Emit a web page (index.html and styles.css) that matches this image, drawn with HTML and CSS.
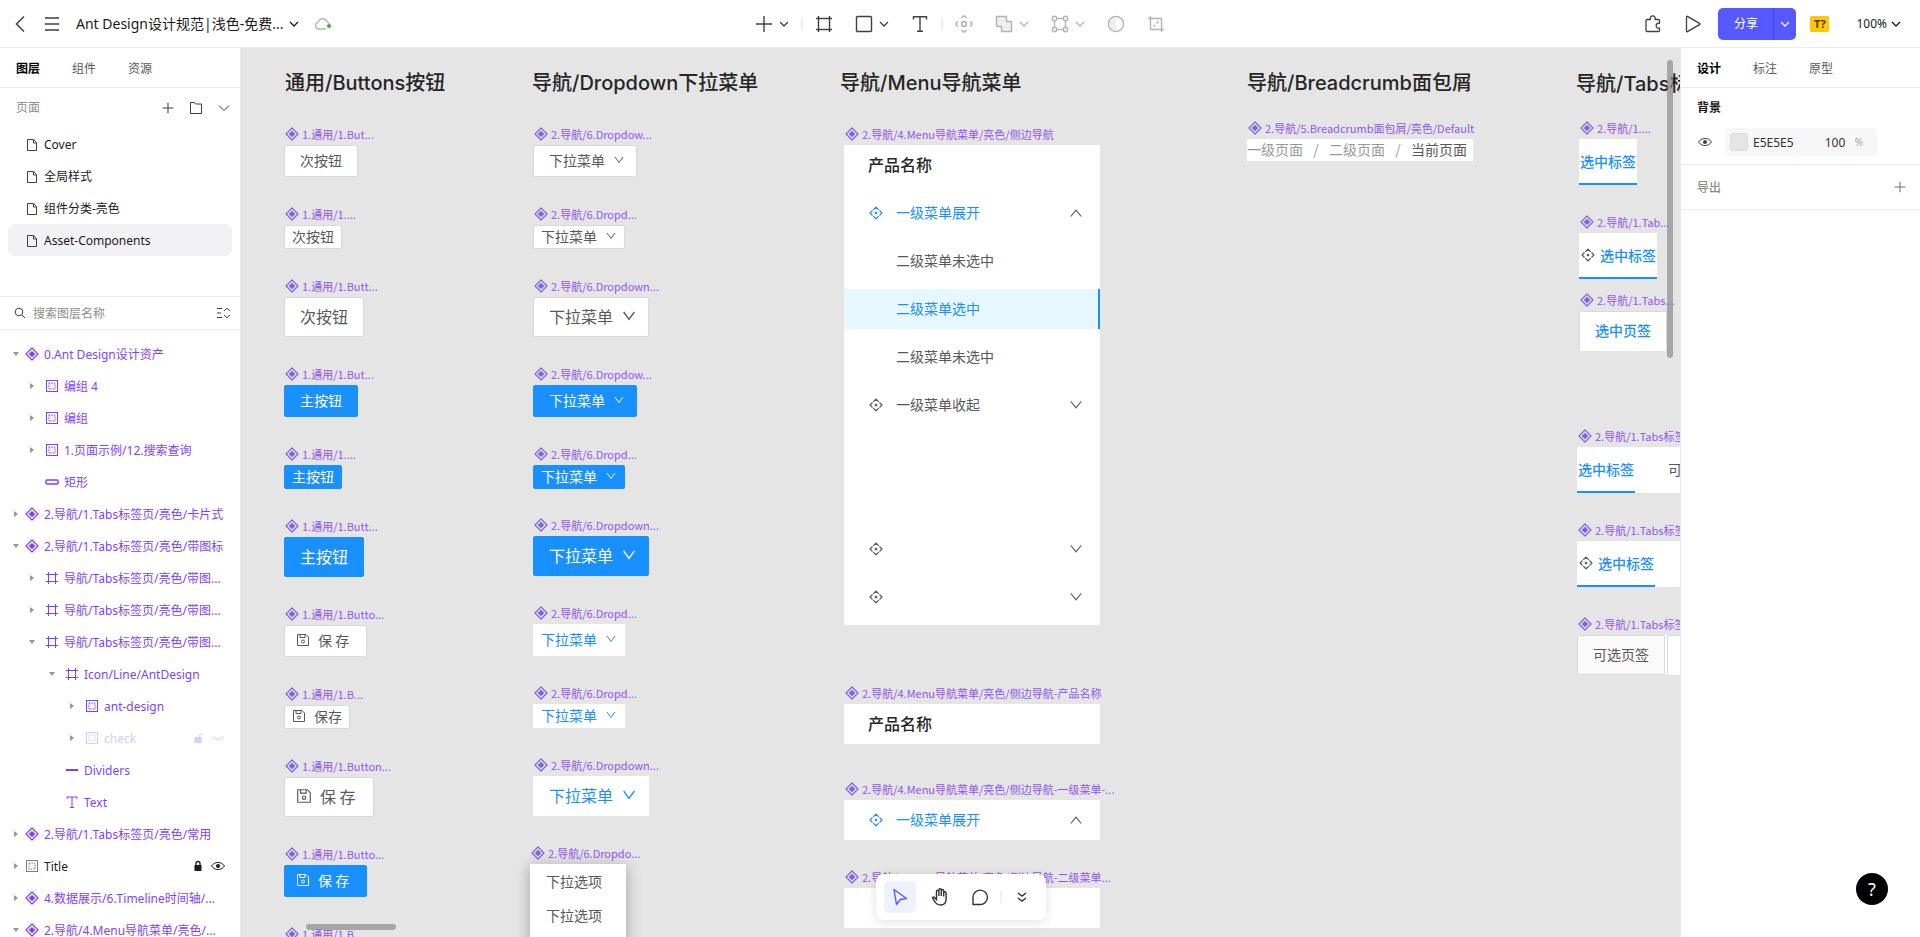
FILE: index.html
```html
<!DOCTYPE html>
<html lang="zh-CN">
<head>
<meta charset="utf-8">
<title>Ant Design设计规范</title>
<link rel="stylesheet" href="styles.css">
</head>
<body>
<svg class="sprite" aria-hidden="true">
  <symbol id="i-back" viewBox="0 0 16 18"><path d="M12 1.500L4.500 9l7.500 7.500"/></symbol>
  <symbol id="i-menu" viewBox="0 0 16 16"><path d="M1 2h14M1 8h14M1 14h14"/></symbol>
  <symbol id="i-down" viewBox="0 0 16 16"><path d="M4 6l4 4 4-4"/></symbol>
  <symbol id="i-down-lg" viewBox="0 0 16 16"><path d="M3 5.500l5 5 5-5"/></symbol>
  <symbol id="i-cloud" viewBox="0 0 18 14"><path d="M12 12H4.500A3.500 3.500 0 0 1 4 5.200 4.700 4.700 0 0 1 12.800 4.600M13 4.600c1.200.5 1.700 1.300 1.900 2.400"/><circle cx="15" cy="9" r="2" fill="#39b316" stroke="none"/></symbol>
  <symbol id="i-plus" viewBox="0 0 24 24"><path d="M12 4v16M4 12h16"/></symbol>
  <symbol id="i-frame" viewBox="0 0 24 24"><path d="M6.500 4v16M17.500 4v16M4 6.500h16M4 17.500h16"/></symbol>
  <symbol id="i-rect" viewBox="0 0 24 24"><rect x="4.500" y="4.500" width="15" height="15" rx="1"/></symbol>
  <symbol id="i-text" viewBox="0 0 24 24"><path d="M5.500 7.500v-2.800h13v2.800M12 4.700v14.600M9 19.300h6"/></symbol>
  <symbol id="i-move" viewBox="0 0 24 24"><circle cx="12" cy="12" r="2.500" fill="#eee"/><path d="M9.500 6L12 3.700 14.500 6M9.500 18l2.500 2.300 2.500-2.300M6 9.500L3.700 12 6 14.500M18 9.500l2.300 2.500-2.300 2.500"/></symbol>
  <symbol id="i-bool" viewBox="0 0 24 24"><path fill="#eee" d="M4.500 4.500h10v5h5v10h-10v-5h-5z"/></symbol>
  <symbol id="i-mask" viewBox="0 0 24 24"><rect x="6.500" y="6.500" width="11" height="11"/><g fill="#fff"><circle cx="6.500" cy="6.500" r="2.200"/><circle cx="17.500" cy="6.500" r="2.200"/><circle cx="6.500" cy="17.500" r="2.200"/><circle cx="17.500" cy="17.500" r="2.200"/></g></symbol>
  <symbol id="i-contrast" viewBox="0 0 24 24"><circle cx="12" cy="12" r="7.500"/><path fill="#eee" stroke="none" d="M12 5.200a6.800 6.800 0 0 0 0 13.600z"/></symbol>
  <symbol id="i-crop" viewBox="0 0 24 24"><path d="M6.500 4v13.500H20M4 6.500h13.500V20M9.500 14.500l1.500-1.500M12.500 11.500l2-2"/></symbol>
  <symbol id="i-puzzle" viewBox="0 0 18 18"><path d="M3 4.500H6.500a2.500 2.500 0 1 1 4.500 0h3.500c.6 0 1 .4 1 1v2.800a2.500 2.500 0 1 0 0 4.700v2.500c0 .6-.4 1-1 1H3c-.6 0-1-.4-1-1v-10c0-.6.4-1 1-1z" stroke-linejoin="round"/></symbol>
  <symbol id="i-play" viewBox="0 0 18 18"><path d="M2.500 1.800v14.400c0 .6.500.7 1 .4l12-7c.6-.3.600-.9 0-1.200l-12-7c-.5-.3-1-.2-1 .4z"/></symbol>
  <symbol id="i-folder" viewBox="0 0 16 16"><path d="M2.500 13.500v-11h4l1 1.500h6v9.500z"/></symbol>
  <symbol id="i-file" viewBox="0 0 16 16"><path d="M3.500 2.500h6l3 3v8h-9zM9.500 2.500v3.500h3"/></symbol>
  <symbol id="i-search" viewBox="0 0 16 16"><circle cx="7" cy="7" r="3.800"/><path d="M9.800 9.800L13 13"/></symbol>
  <symbol id="i-collapse" viewBox="0 0 16 14"><path d="M2 2.500h5M2 7h4M2 11.500h5M9 5l3-2.800L15 5M9 9l3 2.800L15 9"/></symbol>
  <symbol id="i-comp" viewBox="0 0 16 16"><path d="M8 2L14 8 8 14 2 8z" stroke-width="1.200" stroke-linejoin="round"/><path d="M8 4.700L11.300 8 8 11.300 4.700 8z" fill="currentColor" stroke="none"/></symbol>
  <symbol id="i-group" viewBox="0 0 16 16"><rect x="2.500" y="2.500" width="11" height="11"/><rect x="5" y="5" width="6" height="6" stroke-dasharray="1.500 1"/></symbol>
  <symbol id="i-hash" viewBox="0 0 16 16"><path d="M4.500 2v12M11.500 2v12M2 4.500h12M2 11.500h12"/></symbol>
  <symbol id="i-bar" viewBox="0 0 16 16"><rect x="2" y="6" width="12" height="4" rx="1" stroke-width="1.500"/></symbol>
  <symbol id="i-line" viewBox="0 0 16 16"><path d="M2 8h12" stroke-width="2"/></symbol>
  <symbol id="i-type" viewBox="0 0 16 16"><path d="M3 5V3h10v2M8 3v10.500M6 13.500h4"/></symbol>
  <symbol id="i-open" viewBox="0 0 16 16"><path d="M5 6h6l-3 4z" fill="currentColor" stroke="none"/></symbol>
  <symbol id="i-shut" viewBox="0 0 16 16"><path d="M6 5v6l4-3z" fill="currentColor" stroke="none"/></symbol>
  <symbol id="i-lock" viewBox="0 0 16 16"><rect x="4.500" y="7" width="7" height="6" fill="currentColor" stroke="none"/><path d="M6 7V5.500a2 2 0 0 1 4 0V7" stroke-width="1.300"/></symbol>
  <symbol id="i-unlock" viewBox="0 0 16 16"><rect x="4.500" y="7" width="7" height="6" fill="currentColor" stroke="none"/><path d="M9.500 7V5a2 2 0 0 1 3.500 0"/></symbol>
  <symbol id="i-eye" viewBox="0 0 16 16"><path d="M1.500 8C4.500 3.300 11.500 3.300 14.500 8 11.500 12.700 4.500 12.700 1.500 8z"/><circle cx="8" cy="8" r="2" fill="currentColor" stroke="none"/></symbol>
  <symbol id="i-hidden" viewBox="0 0 16 16"><path d="M2 6.500c3.500 3.300 8.500 3.300 12 0M4.500 8.500L3 10M8 9.200V11M11.500 8.500L13 10"/></symbol>
  <symbol id="i-aim" viewBox="0 0 14 14"><path stroke-width="1.200" d="M4.200 3.900L7 1.200l2.800 2.700M10.500 4.500L12.900 7l-2.400 2.500M9.800 10.100L7 12.800l-2.800-2.700M3.500 9.500L1.100 7l2.400-2.500"/><circle cx="7" cy="7" r="1.300" fill="currentColor" stroke="none"/></symbol>
  <symbol id="i-v" viewBox="0 0 12 12"><path d="M2 3l4 5.500L10 3"/></symbol>
  <symbol id="i-vup" viewBox="0 0 12 12"><path d="M1.500 9L6 3.500 10.500 9"/></symbol>
  <symbol id="i-vdn" viewBox="0 0 12 12"><path d="M1.500 3L6 8.500 10.500 3"/></symbol>
  <symbol id="i-save" viewBox="0 0 14 14"><path d="M1.500 1.500h8.500l2.500 2.500v8.500h-11zM4 1.500v3h5v-3"/><circle cx="7" cy="8.500" r="1.500"/></symbol>
  <symbol id="i-cursor" viewBox="0 0 20 20"><path d="M4 2.500l12.500 9-6.200 1-3.800 5z" stroke-linejoin="round"/></symbol>
  <symbol id="i-hand" viewBox="0 0 20 20"><path d="M6.500 10V4.500a1.200 1.200 0 0 1 2.400 0V9M8.900 9V3a1.200 1.200 0 0 1 2.400 0v6M11.300 9V3.700a1.200 1.200 0 0 1 2.400 0V9.500M13.700 9.500V6a1.200 1.200 0 0 1 2.400 0v6c0 4-2.300 6-5.600 6-3 0-4.500-1.500-5.700-3.500L2.700 11.500c-.6-1.100.8-2 1.700-1.100L6.500 12.500V10"/></symbol>
  <symbol id="i-chat" viewBox="0 0 20 20"><path d="M3 17.500V10a7.200 7.200 0 1 1 7.200 7.500z" stroke-linejoin="round"/></symbol>
  <symbol id="i-more" viewBox="0 0 16 16"><path d="M4 4l4 3 4-3M4 9l4 3 4-3"/></symbol>
</svg>

<header class="topbar">
  <div class="topbar-left">
    <button class="ibtn" aria-label="返回"><svg class="ic-back"><use href="#i-back"/></svg></button>
    <button class="ibtn" aria-label="菜单"><svg class="s16 bold"><use href="#i-menu"/></svg></button>
    <button class="file-name">Ant Design设计规范|浅色-免费...<svg class="s16 bold"><use href="#i-down"/></svg></button>
    <svg class="ic-cloud"><use href="#i-cloud"/></svg>
  </div>
  <div class="tools">
    <div class="tool"><button class="ibtn" aria-label="新增"><svg class="s24"><use href="#i-plus"/></svg></button><button class="ibtn" aria-label="新增选项"><svg class="s16 bold"><use href="#i-down"/></svg></button></div>
    <span class="sep"></span>
    <button class="ibtn" aria-label="容器"><svg class="s24"><use href="#i-frame"/></svg></button>
    <div class="tool"><button class="ibtn" aria-label="矩形"><svg class="s24"><use href="#i-rect"/></svg></button><button class="ibtn" aria-label="形状选项"><svg class="s16 bold"><use href="#i-down"/></svg></button></div>
    <button class="ibtn" aria-label="文本"><svg class="s24"><use href="#i-text"/></svg></button>
    <span class="sep"></span>
    <button class="ibtn off" aria-label="组件"><svg class="s24"><use href="#i-move"/></svg></button>
    <div class="tool off"><button class="ibtn" aria-label="布尔运算"><svg class="s24"><use href="#i-bool"/></svg></button><button class="ibtn" aria-label="布尔选项"><svg class="s16 bold"><use href="#i-down"/></svg></button></div>
    <div class="tool off"><button class="ibtn" aria-label="编辑"><svg class="s24"><use href="#i-mask"/></svg></button><button class="ibtn" aria-label="编辑选项"><svg class="s16 bold"><use href="#i-down"/></svg></button></div>
    <button class="ibtn off" aria-label="蒙版"><svg class="s24"><use href="#i-contrast"/></svg></button>
    <button class="ibtn off" aria-label="裁剪"><svg class="s24"><use href="#i-crop"/></svg></button>
  </div>
  <div class="topbar-right">
    <button class="ibtn" aria-label="插件"><svg class="s18"><use href="#i-puzzle"/></svg></button>
    <button class="ibtn" aria-label="演示"><svg class="s18"><use href="#i-play"/></svg></button>
    <div class="share"><button class="share-main">分享</button><button class="share-more" aria-label="分享选项"><svg class="s16 bold"><use href="#i-down"/></svg></button></div>
    <button class="font-warn">T?</button>
    <button class="zoom">100%<svg class="s16 bold"><use href="#i-down"/></svg></button>
  </div>
</header>

<main class="work">
  <aside class="left">
    <div class="tabs"><button class="tab on">图层</button><button class="tab">组件</button><button class="tab">资源</button></div>
    <section class="pages">
      <div class="pages-head"><span>页面</span>
        <button class="ibtn" aria-label="新建页面"><svg class="s16 thin"><use href="#i-plus"/></svg></button>
        <button class="ibtn" aria-label="新建分组"><svg class="s16"><use href="#i-folder"/></svg></button>
        <button class="ibtn" aria-label="折叠"><svg class="s16"><use href="#i-down-lg"/></svg></button>
      </div>
      <button class="page"><svg class="s16"><use href="#i-file"/></svg>Cover</button>
      <button class="page"><svg class="s16"><use href="#i-file"/></svg>全局样式</button>
      <button class="page"><svg class="s16"><use href="#i-file"/></svg>组件分类-亮色</button>
      <button class="page on"><svg class="s16"><use href="#i-file"/></svg>Asset-Components</button>
    </section>
    <div class="search">
      <svg class="s16"><use href="#i-search"/></svg>
      <input type="text" aria-label="搜索图层名称" placeholder="搜索图层名称">
      <button class="ibtn" aria-label="全部折叠"><svg class="ic-collapse"><use href="#i-collapse"/></svg></button>
    </div>
    <div class="tree">
      <div class="row"><svg class="s16 arrow"><use href="#i-open"/></svg><svg class="s16"><use href="#i-comp"/></svg><span class="name">0.Ant Design设计资产</span></div>
      <div class="row l1"><svg class="s16 arrow"><use href="#i-shut"/></svg><svg class="s16"><use href="#i-group"/></svg><span class="name">编组 4</span></div>
      <div class="row l1"><svg class="s16 arrow"><use href="#i-shut"/></svg><svg class="s16"><use href="#i-group"/></svg><span class="name">编组</span></div>
      <div class="row l1"><svg class="s16 arrow"><use href="#i-shut"/></svg><svg class="s16"><use href="#i-group"/></svg><span class="name">1.页面示例/12.搜索查询</span></div>
      <div class="row l1"><svg class="s16 arrow"></svg><svg class="s16"><use href="#i-bar"/></svg><span class="name">矩形</span></div>
      <div class="row"><svg class="s16 arrow"><use href="#i-shut"/></svg><svg class="s16"><use href="#i-comp"/></svg><span class="name">2.导航/1.Tabs标签页/亮色/卡片式</span></div>
      <div class="row"><svg class="s16 arrow"><use href="#i-open"/></svg><svg class="s16"><use href="#i-comp"/></svg><span class="name">2.导航/1.Tabs标签页/亮色/带图标</span></div>
      <div class="row l1"><svg class="s16 arrow"><use href="#i-shut"/></svg><svg class="s16"><use href="#i-hash"/></svg><span class="name">导航/Tabs标签页/亮色/带图...</span></div>
      <div class="row l1"><svg class="s16 arrow"><use href="#i-shut"/></svg><svg class="s16"><use href="#i-hash"/></svg><span class="name">导航/Tabs标签页/亮色/带图...</span></div>
      <div class="row l1"><svg class="s16 arrow"><use href="#i-open"/></svg><svg class="s16"><use href="#i-hash"/></svg><span class="name">导航/Tabs标签页/亮色/带图...</span></div>
      <div class="row l2"><svg class="s16 arrow"><use href="#i-open"/></svg><svg class="s16"><use href="#i-hash"/></svg><span class="name">Icon/Line/AntDesign</span></div>
      <div class="row l3"><svg class="s16 arrow"><use href="#i-shut"/></svg><svg class="s16"><use href="#i-group"/></svg><span class="name">ant-design</span></div>
      <div class="row l3 hidden"><svg class="s16 arrow"><use href="#i-shut"/></svg><svg class="s16"><use href="#i-group"/></svg><span class="name">check</span><span class="acts"><svg class="s16"><use href="#i-unlock"/></svg><svg class="s16"><use href="#i-hidden"/></svg></span></div>
      <div class="row l2"><svg class="s16 arrow"></svg><svg class="s16"><use href="#i-line"/></svg><span class="name">Dividers</span></div>
      <div class="row l2"><svg class="s16 arrow"></svg><svg class="s16"><use href="#i-type"/></svg><span class="name">Text</span></div>
      <div class="row"><svg class="s16 arrow"><use href="#i-shut"/></svg><svg class="s16"><use href="#i-comp"/></svg><span class="name">2.导航/1.Tabs标签页/亮色/常用</span></div>
      <div class="row plain"><svg class="s16 arrow"><use href="#i-shut"/></svg><svg class="s16 grey"><use href="#i-group"/></svg><span class="name">Title</span><span class="acts"><svg class="s16"><use href="#i-lock"/></svg><svg class="s16"><use href="#i-eye"/></svg></span></div>
      <div class="row"><svg class="s16 arrow"><use href="#i-shut"/></svg><svg class="s16"><use href="#i-comp"/></svg><span class="name">4.数据展示/6.Timeline时间轴/...</span></div>
      <div class="row"><svg class="s16 arrow"><use href="#i-open"/></svg><svg class="s16"><use href="#i-comp"/></svg><span class="name">2.导航/4.Menu导航菜单/亮色/...</span></div>
    </div>
  </aside>

  <section class="canvas">
    <h2 class="title" style="--x:44;--y:23">通用/Buttons按钮</h2>
    <h2 class="title" style="--x:291;--y:23">导航/Dropdown下拉菜单</h2>
    <h2 class="title" style="--x:599;--y:23">导航/Menu导航菜单</h2>
    <h2 class="title" style="--x:1006;--y:23">导航/Breadcrumb面包屑</h2>
    <h2 class="title" style="--x:1335;--y:24">导航/Tabs标签页</h2>

    <div class="node" style="--x:43;--y:77"><div class="label"><svg class="s16"><use href="#i-comp"/></svg>1.通用/1.But...</div><button class="btn">次按钮</button></div>
    <div class="node" style="--x:43;--y:157"><div class="label"><svg class="s16"><use href="#i-comp"/></svg>1.通用/1....</div><button class="btn sm">次按钮</button></div>
    <div class="node" style="--x:43;--y:229"><div class="label"><svg class="s16"><use href="#i-comp"/></svg>1.通用/1.Butt...</div><button class="btn lg">次按钮</button></div>
    <div class="node" style="--x:43;--y:317"><div class="label"><svg class="s16"><use href="#i-comp"/></svg>1.通用/1.But...</div><button class="btn primary">主按钮</button></div>
    <div class="node" style="--x:43;--y:397"><div class="label"><svg class="s16"><use href="#i-comp"/></svg>1.通用/1....</div><button class="btn sm primary">主按钮</button></div>
    <div class="node" style="--x:43;--y:469"><div class="label"><svg class="s16"><use href="#i-comp"/></svg>1.通用/1.Butt...</div><button class="btn lg primary">主按钮</button></div>
    <div class="node" style="--x:43;--y:557"><div class="label"><svg class="s16"><use href="#i-comp"/></svg>1.通用/1.Butto...</div><button class="btn save"><svg class="s14"><use href="#i-save"/></svg>保 存</button></div>
    <div class="node" style="--x:43;--y:637"><div class="label"><svg class="s16"><use href="#i-comp"/></svg>1.通用/1.B...</div><button class="btn sm save"><svg class="s14"><use href="#i-save"/></svg>保存</button></div>
    <div class="node" style="--x:43;--y:709"><div class="label"><svg class="s16"><use href="#i-comp"/></svg>1.通用/1.Button...</div><button class="btn lg save"><svg class="s16"><use href="#i-save"/></svg>保 存</button></div>
    <div class="node" style="--x:43;--y:797"><div class="label"><svg class="s16"><use href="#i-comp"/></svg>1.通用/1.Butto...</div><button class="btn save primary"><svg class="s14"><use href="#i-save"/></svg>保 存</button></div>
    <div class="node" style="--x:43;--y:877"><div class="label"><svg class="s16"><use href="#i-comp"/></svg>1.通用/1.B...</div></div>

    <div class="node" style="--x:292;--y:77"><div class="label"><svg class="s16"><use href="#i-comp"/></svg>2.导航/6.Dropdow...</div><button class="btn drop">下拉菜单<svg class="s12"><use href="#i-v"/></svg></button></div>
    <div class="node" style="--x:292;--y:157"><div class="label"><svg class="s16"><use href="#i-comp"/></svg>2.导航/6.Dropd...</div><button class="btn sm drop">下拉菜单<svg class="s12"><use href="#i-v"/></svg></button></div>
    <div class="node" style="--x:292;--y:229"><div class="label"><svg class="s16"><use href="#i-comp"/></svg>2.导航/6.Dropdown...</div><button class="btn lg drop">下拉菜单<svg class="s16"><use href="#i-v"/></svg></button></div>
    <div class="node" style="--x:292;--y:317"><div class="label"><svg class="s16"><use href="#i-comp"/></svg>2.导航/6.Dropdow...</div><button class="btn drop primary">下拉菜单<svg class="s12"><use href="#i-v"/></svg></button></div>
    <div class="node" style="--x:292;--y:397"><div class="label"><svg class="s16"><use href="#i-comp"/></svg>2.导航/6.Dropd...</div><button class="btn sm drop primary">下拉菜单<svg class="s12"><use href="#i-v"/></svg></button></div>
    <div class="node" style="--x:292;--y:468"><div class="label"><svg class="s16"><use href="#i-comp"/></svg>2.导航/6.Dropdown...</div><button class="btn lg drop primary">下拉菜单<svg class="s16"><use href="#i-v"/></svg></button></div>
    <div class="node" style="--x:292;--y:556"><div class="label"><svg class="s16"><use href="#i-comp"/></svg>2.导航/6.Dropd...</div><button class="btn tight drop link">下拉菜单<svg class="s12"><use href="#i-v"/></svg></button></div>
    <div class="node" style="--x:292;--y:636"><div class="label"><svg class="s16"><use href="#i-comp"/></svg>2.导航/6.Dropd...</div><button class="btn sm drop link">下拉菜单<svg class="s12"><use href="#i-v"/></svg></button></div>
    <div class="node" style="--x:292;--y:708"><div class="label"><svg class="s16"><use href="#i-comp"/></svg>2.导航/6.Dropdown...</div><button class="btn lg drop link">下拉菜单<svg class="s16"><use href="#i-v"/></svg></button></div>
    <div class="node" style="--x:289;--y:796"><div class="label"><svg class="s16"><use href="#i-comp"/></svg>2.导航/6.Dropdo...</div><div class="options"><div>下拉选项</div><div>下拉选项</div></div></div>

    <div class="node" style="--x:603;--y:77"><div class="label"><svg class="s16"><use href="#i-comp"/></svg>2.导航/4.Menu导航菜单/亮色/侧边导航</div>
      <div class="side full">
        <div class="brand">产品名称</div>
        <div class="item blue"><svg class="s14"><use href="#i-aim"/></svg><span>一级菜单展开</span><svg class="s14 end"><use href="#i-vup"/></svg></div>
        <div class="item sub">二级菜单未选中</div>
        <div class="item sub sel">二级菜单选中</div>
        <div class="item sub">二级菜单未选中</div>
        <div class="item"><svg class="s14"><use href="#i-aim"/></svg><span>一级菜单收起</span><svg class="s14 end"><use href="#i-vdn"/></svg></div>
        <div class="item"></div>
        <div class="item"></div>
        <div class="item"><svg class="s14"><use href="#i-aim"/></svg><svg class="s14 end"><use href="#i-vdn"/></svg></div>
        <div class="item"><svg class="s14"><use href="#i-aim"/></svg><svg class="s14 end"><use href="#i-vdn"/></svg></div>
      </div>
    </div>
    <div class="node" style="--x:603;--y:636"><div class="label"><svg class="s16"><use href="#i-comp"/></svg>2.导航/4.Menu导航菜单/亮色/侧边导航-产品名称</div><div class="side"><div class="brand">产品名称</div></div></div>
    <div class="node" style="--x:603;--y:732"><div class="label"><svg class="s16"><use href="#i-comp"/></svg>2.导航/4.Menu导航菜单/亮色/侧边导航-一级菜单-...</div><div class="side"><div class="item blue"><svg class="s14"><use href="#i-aim"/></svg><span>一级菜单展开</span><svg class="s14 end"><use href="#i-vup"/></svg></div></div></div>
    <div class="node" style="--x:603;--y:820"><div class="label"><svg class="s16"><use href="#i-comp"/></svg>2.导航/4.Menu导航菜单/亮色/侧边导航-二级菜单...</div><div class="side"><div class="item"></div></div></div>

    <div class="node" style="--x:1006;--y:71"><div class="label"><svg class="s16"><use href="#i-comp"/></svg>2.导航/5.Breadcrumb面包屑/亮色/Default</div>
      <div class="crumbs"><span>一级页面</span><i>/</i><span>二级页面</span><i>/</i><b>当前页面</b></div>
    </div>

    <div class="node" style="--x:1338;--y:71"><div class="label"><svg class="s16"><use href="#i-comp"/></svg>2.导航/1....</div><div class="tabset"><div class="t on">选中标签</div></div></div>
    <div class="node" style="--x:1338;--y:165"><div class="label"><svg class="s16"><use href="#i-comp"/></svg>2.导航/1.Tab...</div><div class="tabset"><div class="t on"><svg class="s14"><use href="#i-aim"/></svg>选中标签</div></div></div>
    <div class="node" style="--x:1338;--y:243"><div class="label"><svg class="s16"><use href="#i-comp"/></svg>2.导航/1.Tabs...</div><div class="cards"><div class="c on">选中页签</div></div></div>
    <div class="node" style="--x:1336;--y:379"><div class="label"><svg class="s16"><use href="#i-comp"/></svg>2.导航/1.Tabs标签页/亮色/常用</div><div class="tabset wide"><div class="t on">选中标签</div><div class="t">可选标签</div></div></div>
    <div class="node" style="--x:1336;--y:473"><div class="label"><svg class="s16"><use href="#i-comp"/></svg>2.导航/1.Tabs标签页/亮色/带图标</div><div class="tabset wide"><div class="t on"><svg class="s14"><use href="#i-aim"/></svg>选中标签</div></div></div>
    <div class="node" style="--x:1336;--y:567"><div class="label"><svg class="s16"><use href="#i-comp"/></svg>2.导航/1.Tabs标签页/亮色/卡片式</div><div class="cards back"><div class="c">可选页签</div><div class="c on blank"></div></div></div>

    <div class="vbar"></div>
    <div class="hbar"></div>
    <div class="dock">
      <button class="dock-btn on" aria-label="选择"><svg class="s20"><use href="#i-cursor"/></svg></button>
      <button class="dock-btn" aria-label="移动画布"><svg class="s20"><use href="#i-hand"/></svg></button>
      <button class="dock-btn" aria-label="评论"><svg class="s20"><use href="#i-chat"/></svg></button>
      <span class="sep"></span>
      <button class="dock-btn" aria-label="更多"><svg class="s16"><use href="#i-more"/></svg></button>
    </div>
  </section>

  <aside class="right">
    <div class="tabs"><button class="tab on">设计</button><button class="tab">标注</button><button class="tab">原型</button></div>
    <section class="bg">
      <h3>背景</h3>
      <div class="bg-row">
        <button class="ibtn" aria-label="显示背景"><svg class="s16"><use href="#i-eye"/></svg></button>
        <div class="field"><span class="swatch"></span><input class="hex" type="text" aria-label="颜色" value="E5E5E5"><input class="alpha" type="text" aria-label="不透明度" value="100"><span class="unit">%</span></div>
      </div>
    </section>
    <section class="export"><span>导出</span><button class="ibtn" aria-label="添加导出"><svg class="s16 thin"><use href="#i-plus"/></svg></button></section>
    <button class="help" aria-label="帮助">?</button>
  </aside>
</main>
</body>
</html>
```
FILE: styles.css
```css
* { box-sizing: border-box; }
body {
  margin: 0; height: 100vh; display: flex; flex-direction: column; overflow: hidden;
  font: 12px/20px "Noto Sans", "Noto Sans CJK SC", sans-serif; color: #1a1a1a; background: #fff;
}
button, input { font: inherit; color: inherit; border: 0; padding: 0; margin: 0; background: none; min-width: 0; }
input { outline: 0; }
h2, h3 { margin: 0; font: inherit; }
svg { fill: none; stroke: currentColor; flex: none; display: block; }
.sprite { position: absolute; width: 0; height: 0; }
.s12 { width: 12px; height: 12px; }
.s14 { width: 14px; height: 14px; }
.s16 { width: 16px; height: 16px; }
.s18 { width: 18px; height: 18px; }
.s20 { width: 20px; height: 20px; }
.s24 { width: 24px; height: 24px; stroke-width: 1.4; }
.bold { stroke-width: 1.3; }
.thin { stroke-width: 1.6; }
.ibtn { display: flex; align-items: center; justify-content: center; color: #404040; }

/* top bar */
.topbar { flex: none; height: 48px; display: grid; grid-template-columns: 1fr auto 1fr; align-items: center; border-bottom: 1px solid #ebebeb; }
.topbar-left { display: flex; align-items: center; padding-left: 12px; }
.topbar-left .ibtn + .ibtn { margin-left: 16px; }
.ic-back { width: 16px; height: 18px; stroke-width: 1.5; }
.ic-cloud { width: 18px; height: 14px; color: #b5b5b5; stroke-width: 1.4; margin-left: 12px; }
.file-name { display: flex; align-items: center; gap: 3px; margin-left: 16px; font-size: 14px; }
.tools { display: flex; align-items: center; gap: 16px; }
.tool { display: flex; align-items: center; }
.off, .off .ibtn { color: #b3b3b3; }
.sep { width: 2px; height: 12px; background: #f0f0f0; }
.tools .sep { margin: 0 -7px; }
.topbar-right { display: flex; align-items: center; justify-content: flex-end; padding-right: 16px; }
.topbar-right .ibtn { margin-right: 22px; stroke-width: 1.3; }
.topbar-right .ibtn + .ibtn { margin-right: 16px; }
.share { display: flex; height: 32px; border-radius: 5px; overflow: hidden; background: #5659ff; color: #fff; }
.share-main { width: 56px; border-right: 1px solid #4446e0; }
.share-more { width: 22px; display: flex; align-items: center; justify-content: center; }
.font-warn { width: 19px; height: 16px; border-radius: 2px; background: #ffc60a; color: #4d3b00; font-size: 11px; font-weight: 700; line-height: 16px; margin: 0 27px 0 14px; }
.zoom { display: flex; align-items: center; gap: 1px; }

/* workspace */
.work { flex: 1; min-height: 0; display: grid; grid-template-columns: 241px minmax(0, 1fr) 240px; }
.left, .right { min-height: 0; display: flex; flex-direction: column; overflow: hidden; }
.left { border-right: 1px solid #ebebeb; }
.right { border-left: 1px solid #ebebeb; }
.tabs { flex: none; height: 40px; display: flex; gap: 32px; padding: 2px 16px 0; border-bottom: 1px solid #ebebeb; color: #595959; }
.tab.on { color: #000; font-weight: 700; }
.pages { flex: none; height: 209px; padding: 0 8px; border-bottom: 1px solid #ebebeb; }
.pages-head { height: 40px; display: flex; align-items: center; gap: 12px; padding: 0 0 0 8px; color: #8c8c8c; }
.pages-head span { margin-right: auto; }
.page { width: 100%; height: 32px; display: flex; align-items: center; gap: 4px; padding: 2px 16px 0; border-radius: 6px; }
.page svg { color: #404040; }
.page.on { background: #f2f2f4; }
.search { flex: none; height: 33px; display: flex; align-items: center; gap: 5px; padding: 0 9px 0 12px; border-bottom: 1px solid #ebebeb; color: #404040; }
.search input { flex: 1; padding-top: 2px; }
.search input::placeholder { color: #8c8c8c; opacity: 1; }
.ic-collapse { width: 16px; height: 14px; }
.tree { flex: 1; min-height: 0; overflow: hidden; padding-top: 8px; color: #7f3fff; }
.row { height: 32px; display: flex; align-items: center; padding: 0 8px; white-space: nowrap; }
.row .arrow { color: #999; }
.row .name { margin-left: 4px; padding-top: 2px; }
.l1 { padding-left: 24px; }
.l2 { padding-left: 44px; }
.l3 { padding-left: 64px; }
.l1 .arrow, .l2 .arrow, .l3 .arrow { margin-right: 4px; }
.hidden { color: #d6ccff; }
.plain { color: #1a1a1a; }
.plain .grey { color: #808080; }
.acts { display: flex; gap: 4px; margin-left: auto; padding-right: 6px; }

/* canvas */
.canvas { position: relative; overflow: hidden; background: #e5e5e5; font-family: "Noto Sans CJK SC", sans-serif; }
.title, .node { position: absolute; left: calc(var(--x) * 1px); top: calc(var(--y) * 1px); white-space: nowrap; }
.node { display: flex; flex-direction: column; align-items: flex-start; }
.title { font: 500 20px/24px Inter, "Noto Sans CJK SC", sans-serif; color: #262626; }
.label { height: 20px; display: flex; align-items: center; padding-bottom: 2px; font-size: 11px; line-height: 18px; color: #9254f5; }
.label svg { color: #7b61ee; margin-right: 2px; }
.btn { height: 32px; display: flex; align-items: center; padding: 0 15px 2px; border: 1px solid #d9d9d9; border-radius: 2px; background: #fff; color: #595959; font-size: 14px; line-height: 20px; }
.btn.sm { height: 24px; padding: 0 7px 2px; }
.btn.lg { height: 40px; font-size: 16px; }
.btn.tight { padding: 0 7px 2px; }
.save svg { margin-right: 8px; }
.btn.save { padding: 0 17px 2px 11px; }
.btn.sm.save { padding: 0 7px 2px; }
.drop svg { margin-left: 8px; }
.btn.drop { padding-right: 11px; }
.btn.sm.drop, .btn.tight.drop { padding-right: 7px; }
.btn.primary { background: #1890ff; border-color: #1890ff; color: #fff; }
.btn.link { border-color: #fff; border-radius: 0; color: #1890ff; }
.options { width: 96px; padding: 0 0 20px; background: #fff; box-shadow: 0 3px 14px rgba(0, 0, 0, .3); color: #595959; font-size: 14px; line-height: 34px; }
.options div { padding-left: 16px; }
.side { width: 256px; display: grid; gap: 8px; background: #fff; font-size: 14px; }
.side.full { padding-bottom: 8px; }
.brand { height: 40px; padding-left: 24px; font-size: 16px; font-weight: 500; line-height: 38px; color: #262626; }
.item { height: 40px; display: flex; align-items: center; gap: 13px; padding: 0 17px 0 25px; color: #595959; }
.item span { padding-bottom: 2px; }
.item.blue { color: #1890ff; }
.item .end { margin-left: auto; color: #595959; }
.item.sub { padding: 0 0 2px 52px; }
.item.sel { background: #e6f7ff; color: #1890ff; border-right: 2px solid #1890ff; }
.crumbs { width: 226px; display: flex; padding-bottom: 2px; background: #fff; color: #999; font-size: 14px; line-height: 20px; }
.crumbs i { width: 26px; text-align: center; font-style: normal; }
.crumbs b { font-weight: 400; color: #595959; }
.tabset { display: flex; gap: 32px; background: #fff; font-size: 14px; }
.t { height: 46px; display: flex; align-items: center; gap: 5px; padding: 0 1px; color: #595959; border-bottom: 2px solid transparent; }
.t.on { color: #1890ff; font-weight: 500; border-bottom-color: #1890ff; }
.t svg { color: #595959; margin-left: 1px; }
.wide, .back { width: 400px; }
.cards { display: flex; gap: 2px; font-size: 14px; }
.c { height: 40px; display: flex; align-items: center; padding: 0 15px 2px; border: 1px solid #d9d9d9; border-radius: 2px 2px 0 0; background: #fafafa; color: #595959; }
.c.on { background: #fff; color: #1890ff; border-bottom-color: #fff; font-weight: 500; }
.c.blank { width: 88px; }
.back { background: #fff; }
.vbar, .hbar { position: absolute; border-radius: 3px; background: rgba(140, 140, 140, .7); }
.vbar { right: 7px; top: 12px; width: 6px; height: 298px; }
.hbar { left: 65px; bottom: 7px; width: 90px; height: 6px; }
.dock { position: absolute; bottom: 17px; left: 50%; transform: translateX(-50%); display: flex; align-items: center; gap: 8px; padding: 7px 8px; border-radius: 8px; background: #fff; box-shadow: 0 2px 12px rgba(0, 0, 0, .12); }
.dock-btn { width: 32px; height: 32px; display: flex; align-items: center; justify-content: center; border-radius: 5px; color: #333; stroke-width: 1.4; }
.dock-btn.on { background: #eef1ff; color: #5659ff; }
.dock .sep { margin: 0 -4px; }

/* right panel */
.bg { height: 77px; padding: 10px 16px 8px; border-bottom: 1px solid #ebebeb; }
.bg h3 { font-weight: 700; color: #1a1a1a; }
.bg-row { display: flex; align-items: center; gap: 12px; padding-top: 10px; }
.field { width: 152px; height: 28px; display: flex; align-items: center; padding: 0 14px 0 5px; border-radius: 5px; background: #f7f7f7; color: #333; }
.field input { padding-top: 2px; }
.swatch { width: 18px; height: 18px; margin-right: 5px; border: 1px solid #dcdcdc; border-radius: 3px; background: #e5e5e5; }
.hex { flex: 1; }
.alpha { width: 30px; }
.unit { color: #a6a6a6; font-size: 10px; }
.export { height: 45px; display: flex; align-items: center; justify-content: space-between; padding: 0 12px 0 16px; border-bottom: 1px solid #ebebeb; color: #8c8c8c; font-weight: 500; }
.export span { padding-top: 2px; }
.export .ibtn { color: #737373; }
.help { width: 32px; height: 32px; margin: auto 32px 32px auto; border-radius: 50%; background: #000; color: #fff; font-size: 18px; line-height: 32px; }
```
